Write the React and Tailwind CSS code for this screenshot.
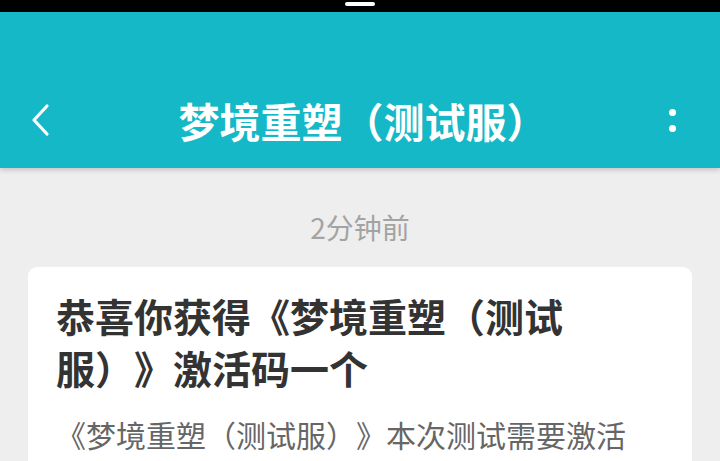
export default function App() {
  return (
    <div className="w-[720px] h-[461px] overflow-hidden bg-[#eeeeee] font-['Noto_Sans_CJK_SC','Noto_Sans',sans-serif] [text-spacing-trim:space-all]">
      <div className="h-[12px] bg-black flex justify-center pt-[2px]">
        <div className="w-[30px] h-[4px] rounded-full bg-white" />
      </div>
      <div className="relative z-10 h-[156px] bg-[#15b8c6] shadow-[0_2px_5px_rgba(0,0,0,0.18)] flex flex-col justify-end">
        <div className="h-[96px] flex items-center pl-[28px] pr-[36px]">
          <svg width="24" height="34" viewBox="0 0 24 34" className="shrink-0">
            <path d="M19 3 L6 17 L19 31" fill="none" stroke="white" strokeWidth="3.2" strokeLinecap="round" strokeLinejoin="round" />
          </svg>
          <h1 className="flex-1 text-center text-white text-[41px] font-bold leading-none pl-[14px]">
            梦境重塑（测试服）
          </h1>
          <div className="w-[24px] flex flex-col items-center gap-[9px]">
            <span className="w-[7px] h-[7px] rounded-full bg-white" />
            <span className="w-[7px] h-[7px] rounded-full bg-white" />
          </div>
        </div>
      </div>
      <div className="pt-[40px] text-center text-[28px] leading-[38px] text-[#a3a3a3]">2分钟前</div>
      <div className="mx-[28px] mt-[21px] bg-white rounded-[9px] pl-[28px] pr-[40px] pt-[22px] pb-[30px]">
        <h2 className="text-[39px] leading-[52px] font-semibold text-[#333333]">
          恭喜你获得《梦境重塑（测试服）》激活码一个
        </h2>
        <p className="mt-[20px] text-[30px] leading-[42px] text-[#666666]">
          《梦境重塑（测试服）》本次测试需要激活码才能进入游戏
        </p>
      </div>
    </div>
  );
}
